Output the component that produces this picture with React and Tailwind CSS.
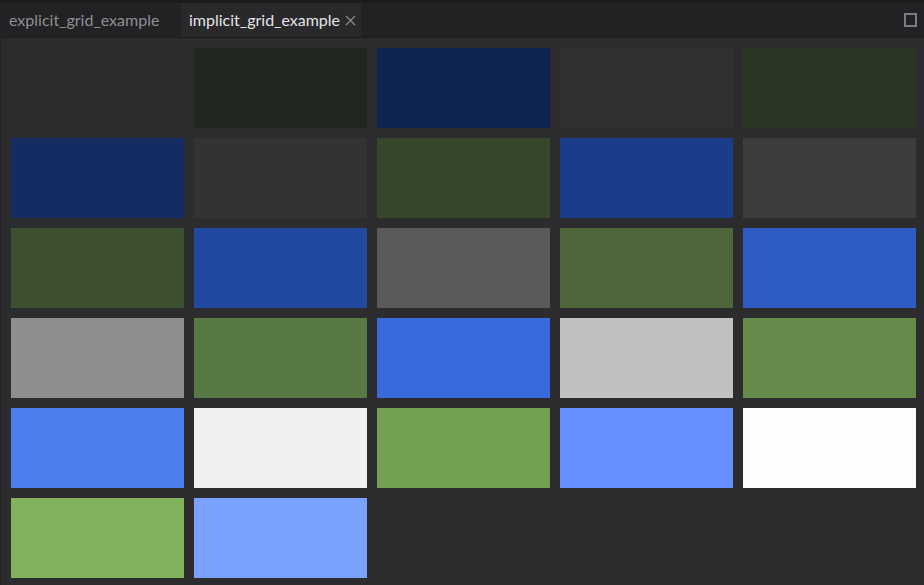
import React from 'react';

// colours of the implicit grid cells, row by row
const cells = [
  '#2c2b2e', '#1f271e', '#0f2350', '#302f32', '#2a3524',
  '#142b64', '#333235', '#36472b', '#1b3c8a', '#3d3c3f',
  '#3e5032', '#2249a0', '#5a595b', '#4d673b', '#2f5cc4',
  '#8e8e8e', '#587844', '#3a69dc', '#c0c0c0', '#668b4b',
  '#4b80ec', '#f0f0ee', '#74a052', '#6690ff', '#fdfefc',
  '#80b35c', '#7ba1ff',
];

export default function App() {
  return (
    <div className="w-[924px] h-[585px] flex flex-col bg-[#2c2b2e] overflow-hidden font-['Lato',sans-serif]">
      {/* tab bar */}
      <div className="h-[38px] flex items-end bg-[#222124] border-t-[3px] border-[#1b1a1c] border-b border-b-[#1b1a1d]">
        <div className="h-full flex items-center pl-[9px] w-[181px] text-[16px] text-[#8f8f92]">
          explicit_grid_example
        </div>
        <div className="h-full flex items-center pl-[8px] w-[180px] bg-[#29282b] text-[16px] text-[#e4e4e6]">
          <span>implicit_grid_example</span>
          <svg className="ml-[5px]" width="11" height="11" viewBox="0 0 11 11">
            <path d="M1 1 L10 10 M10 1 L1 10" stroke="#8a8a8d" strokeWidth="1.3" />
          </svg>
        </div>
        <div className="flex-1 h-full flex items-center justify-end pr-[7px]">
          <div className="w-[13px] h-[14px] border-2 border-[#7c7c80]" />
        </div>
      </div>
      {/* grid */}
      <div className="flex-1 border-l border-[#222124] pl-[10px] pt-[10px] grid grid-cols-[repeat(5,173px)] auto-rows-[80px] gap-[10px]">
        {cells.map((c, i) => (
          <div key={i} style={{ backgroundColor: c }} />
        ))}
      </div>
    </div>
  );
}
